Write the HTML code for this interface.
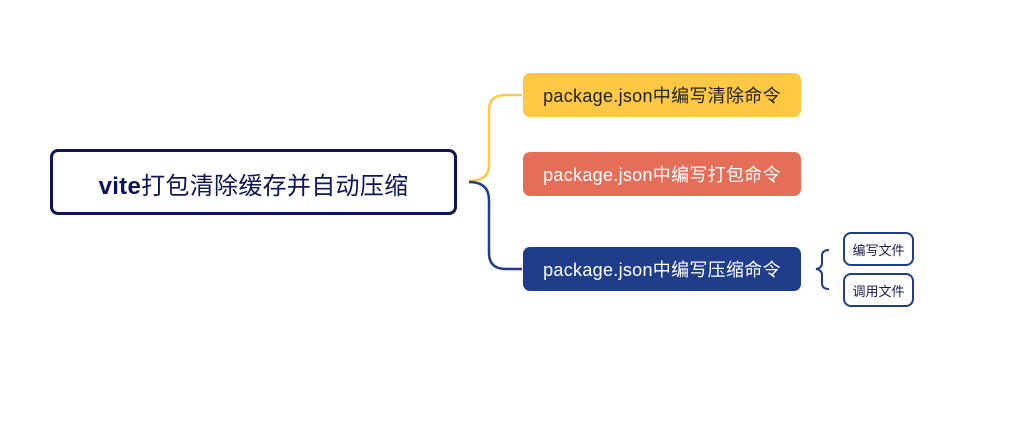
<!DOCTYPE html><html><head><style>
body{margin:0;width:1014px;height:421px;background:#fff;position:relative;overflow:hidden;font-family:"Liberation Sans","Noto Sans CJK SC",sans-serif}
.b{position:absolute;box-sizing:border-box;display:flex;align-items:center;justify-content:center;white-space:nowrap}
</style></head><body>
<svg width="1014" height="421" style="position:absolute;left:0;top:0">
<path d="M469 181 Q489 181 489 165 L489 110 Q489 95 506 95 L522 95" fill="none" stroke="#fec844" stroke-width="2.5"/>
<path d="M469 182 Q489 182 489 200 L489 253 Q489 269 506 269 L522 269" fill="none" stroke="#203d8a" stroke-width="2.5"/>
<path d="M829 250 Q822 250 822 256 L822 263 Q822 268 816 269 Q822 270 822 275 L822 283 Q822 289 829 289" fill="none" stroke="#203d8a" stroke-width="2"/>
</svg>
<div class="b" style="left:50px;top:149px;width:407px;height:66px;border:3px solid #0d1459;border-radius:8px;color:#0d1459;font-size:24px;padding-top:2px;letter-spacing:0.3px"><span><span style="font-weight:600">vite</span>打包清除缓存并自动压缩</span></div>
<div class="b" style="left:523px;top:73px;width:278px;height:44px;background:#fec844;border-radius:7px;color:#222;font-size:18px;letter-spacing:0.3px">package.json中编写清除命令</div>
<div class="b" style="left:523px;top:152px;width:278px;height:44px;background:#e46e58;border-radius:7px;color:#fff;font-size:18px;letter-spacing:0.3px">package.json中编写打包命令</div>
<div class="b" style="left:523px;top:247px;width:278px;height:44px;background:#203d8a;border-radius:7px;color:#fff;font-size:18px;letter-spacing:0.3px">package.json中编写压缩命令</div>
<div class="b" style="left:843px;top:232px;width:71px;height:34px;border:2px solid #203d8a;border-radius:8px;color:#1a1a50;font-size:13px">编写文件</div>
<div class="b" style="left:843px;top:273px;width:71px;height:34px;border:2px solid #203d8a;border-radius:8px;color:#1a1a50;font-size:13px">调用文件</div>
</body></html>
